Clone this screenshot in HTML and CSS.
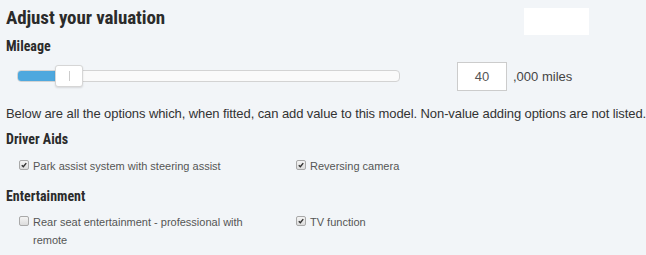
FILE: index.html
```html
<html>

<head>
  <title>Adjust your valuation</title>
  <meta charset="utf-8">
  <link rel="stylesheet" href="styles.css">
</head>

<body>
  <div id="valuation">
    <div class="head">
      <h2>Adjust your valuation</h2>
      <div class="blank"></div>
    </div>
    <h3 class="first">Mileage</h3>
    <div class="mileage">
      <div class="slider">
        <div class="fill"></div>
        <div class="handle"><i></i></div>
      </div>
      <input class="miles" type="text" value="40">
      <span class="unit">,000 miles</span>
    </div>
    <p class="note">Below are all the options which, when fitted, can add value to this model. Non-value adding options are not listed.</p>

    <h3>Driver Aids</h3>
    <ul class="options">
      <li><span class="box checked"><svg viewBox="0 0 10 10"><path d="M2.2 5.2 L4.2 7.2 L7.8 2.6" /></svg></span><label>Park assist system with steering assist</label></li>
      <li><span class="box checked"><svg viewBox="0 0 10 10"><path d="M2.2 5.2 L4.2 7.2 L7.8 2.6" /></svg></span><label>Reversing camera</label></li>
    </ul>

    <h3>Entertainment</h3>
    <ul class="options last">
      <li><span class="box"></span><label>Rear seat entertainment - professional with remote</label></li>
      <li><span class="box checked"><svg viewBox="0 0 10 10"><path d="M2.2 5.2 L4.2 7.2 L7.8 2.6" /></svg></span><label>TV function</label></li>
    </ul>
  </div>
</body>

</html>
```

FILE: styles.css
```css
* {
  margin: 0;
  padding: 0;
  box-sizing: border-box;
}

li {
  list-style: none;
}

body {
  background: #f2f5f8;
  font-family: "Liberation Sans", Arial, sans-serif;
  color: #333;
}

#valuation {
  padding: 7px 6px 0;
}

.head {
  display: flex;
  align-items: flex-start;
}

h2 {
  font-family: "Roboto Condensed", "Liberation Sans Narrow", Roboto, sans-serif;
  font-weight: bold;
  font-size: 19px;
  line-height: 22px;
  letter-spacing: -0.1px;
  color: #2b2b2b;
  width: 518px;
}

.blank {
  width: 65px;
  height: 27px;
  margin-top: 1px;
  background: #fff;
}

h3 {
  font-family: "Roboto Condensed", "Liberation Sans Narrow", Roboto, sans-serif;
  font-weight: bold;
  font-size: 14px;
  line-height: 18px;
  color: #2b2b2b;
}

h3.first {
  margin-top: 2px;
}

.mileage {
  display: flex;
  align-items: center;
  height: 40px;
  margin-top: 1px;
}

.slider {
  position: relative;
  width: 383px;
  height: 12px;
  margin-left: 11px;
  background: #fafafa;
  border: 1px solid #d3d3d3;
  border-radius: 4px;
}

.fill {
  width: 40px;
  height: 100%;
  background: #4ea8de;
  border-radius: 3px 0 0 3px;
}

/* handle sits over the track */
.handle {
  position: absolute;
  left: 37px;
  top: -6px;
  width: 28px;
  height: 22px;
  background: #fff;
  border: 1px solid #d6d6d6;
  border-radius: 3px;
  box-shadow: 0 1px 2px rgba(0, 0, 0, .12);
}

.handle i {
  display: block;
  width: 1px;
  height: 10px;
  margin: 5px auto 0;
  background: #ccc;
}

.miles {
  width: 50px;
  height: 29px;
  margin-left: 57px;
  border: 1px solid #ccc;
  background: #fff;
  font-family: "Liberation Sans", Arial, sans-serif;
  font-size: 13px;
  color: #555;
  text-align: center;
  outline: none;
}

.unit {
  margin-left: 6px;
  font-size: 13px;
  color: #444;
}

.note {
  margin-top: 10px;
  margin-bottom: 8px;
  font-size: 13px;
  line-height: 16px;
  letter-spacing: -0.09px;
  color: #333;
  white-space: nowrap;
}

.options {
  display: flex;
  padding: 9px 0 12px 12px;
}

.options.last {
  padding-top: 8px;
  padding-bottom: 0;
}

.options li {
  display: flex;
  align-items: flex-start;
  width: 277px;
  padding-right: 36px;
}

.box {
  flex: none;
  width: 10px;
  height: 10px;
  margin: 3px 4px 0 1px;
  border: 1px solid #a9a9a9;
  border-radius: 2px;
  background: linear-gradient(#f4f4f4, #dcdcdc);
}

.box svg {
  display: block;
  width: 8px;
  height: 8px;
}

.box path {
  fill: none;
  stroke: #333;
  stroke-width: 1.8;
}

label {
  font-size: 11px;
  line-height: 18px;
  color: #555;
}
```
